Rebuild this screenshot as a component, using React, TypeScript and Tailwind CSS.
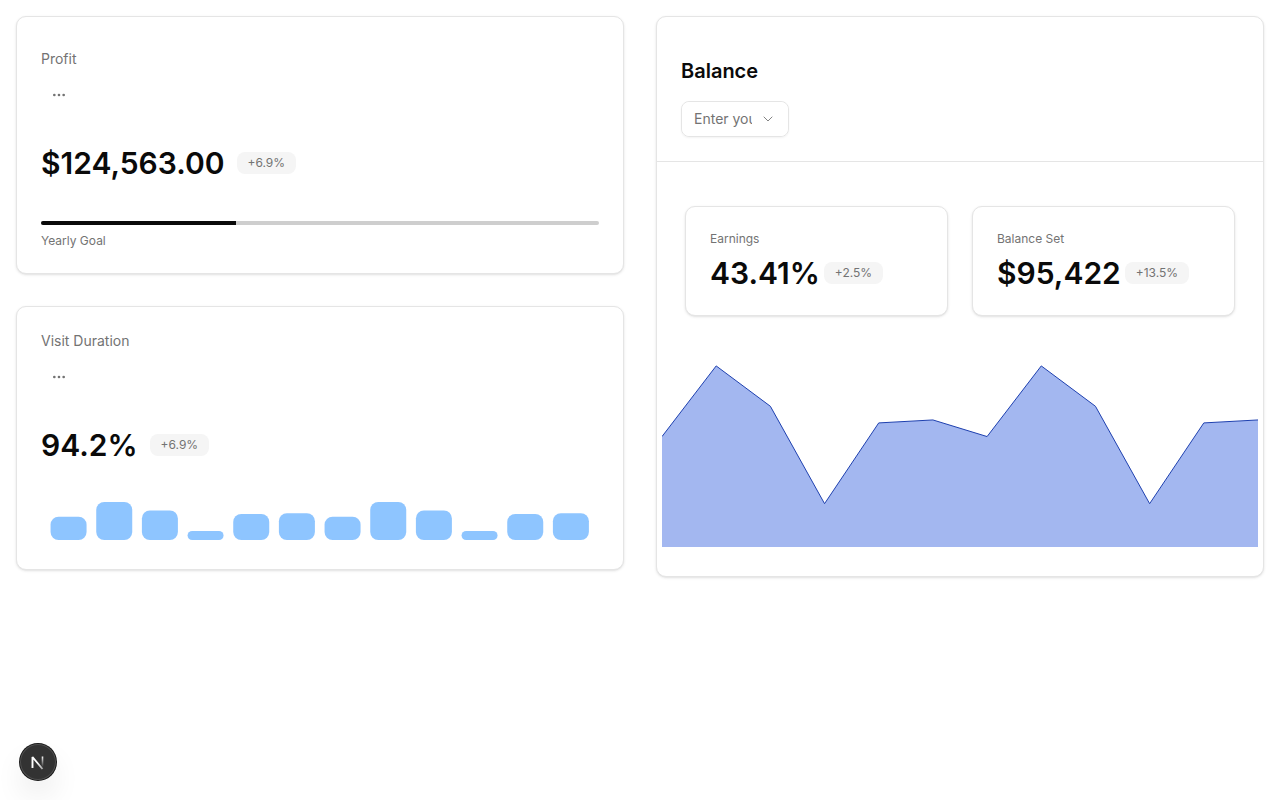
import type { ReactNode } from "react";
import { ChevronDown, Ellipsis } from "lucide-react";
import clsx from "clsx";

const visitors = [186, 305, 237, 73, 209, 214, 186, 305, 237, 73, 209, 214];
const DOMAIN_MAX = 320;

function Card({
  className,
  children,
}: {
  className?: string;
  children: ReactNode;
}) {
  return (
    <div
      className={clsx(
        "rounded-[10px] border border-neutral-200 bg-white shadow-sm",
        className
      )}
    >
      {children}
    </div>
  );
}

function Badge({ children }: { children: ReactNode }) {
  return (
    <span className="inline-flex items-center rounded-lg border border-transparent bg-neutral-100 px-2.5 py-0.5 text-xs text-neutral-500">
      {children}
    </span>
  );
}

function MoreButton({ label }: { label: string }) {
  return (
    <button
      type="button"
      aria-label={label}
      className="flex size-9 items-center justify-center rounded-md text-neutral-500 hover:bg-neutral-100"
    >
      <Ellipsis className="size-4" />
    </button>
  );
}

function VisitBars() {
  const slot = 548 / visitors.length;

  return (
    <svg viewBox="0 0 558 50" className="block w-full" aria-hidden="true">
      {visitors.map((value, i) => {
        const height = (value / DOMAIN_MAX) * 40;
        return (
          <rect
            key={i}
            x={5 + i * slot + slot * 0.1}
            y={45 - height}
            width={36}
            height={height}
            rx={Math.min(8, height / 2)}
            className="fill-blue-300"
          />
        );
      })}
    </svg>
  );
}

function BalanceArea() {
  const points = visitors
    .map((value, i) => {
      const x = (i * 596) / (visitors.length - 1);
      const y = 190 - (value / DOMAIN_MAX) * 190;
      return `${x.toFixed(2)},${y.toFixed(2)}`;
    })
    .join(" L");

  return (
    <svg
      viewBox="0 0 596 190"
      preserveAspectRatio="none"
      className="block h-[190px] w-full"
      aria-hidden="true"
    >
      <path d={`M${points} L596,190 L0,190 Z`} className="fill-[#a3b7f0]" />
      <path
        d={`M${points}`}
        fill="none"
        vectorEffect="non-scaling-stroke"
        className="stroke-[#1e40af]"
      />
    </svg>
  );
}

function StatCard({
  label,
  value,
  change,
}: {
  label: string;
  value: string;
  change: string;
}) {
  return (
    <Card className="p-6">
      <p className="text-xs text-neutral-500">{label}</p>
      <div className="mt-2 flex items-center gap-1">
        <span className="text-3xl font-semibold">{value}</span>
        <Badge>{change}</Badge>
      </div>
    </Card>
  );
}

export default function App() {
  return (
    <main className="min-h-screen bg-white p-4 font-['Inter',sans-serif] text-neutral-950 antialiased">
      <div className="grid grid-cols-2 items-start gap-8">
        <div className="flex flex-col gap-8">
          {/* Profit */}
          <Card className="px-6 pt-8 pb-6">
            <h2 className="text-sm text-neutral-500">Profit</h2>
            <div className="mt-2">
              <MoreButton label="Profit options" />
            </div>
            <div className="mt-8 flex items-center gap-3">
              <span className="text-3xl font-semibold">$124,563.00</span>
              <Badge>+6.9%</Badge>
            </div>
            <div
              role="progressbar"
              aria-label="Yearly Goal"
              aria-valuenow={35}
              className="mt-10 h-1 overflow-hidden rounded-full bg-neutral-950/20"
            >
              <div className="h-full w-[35%] bg-neutral-950" />
            </div>
            <p className="mt-2 text-xs text-neutral-500">Yearly Goal</p>
          </Card>

          {/* Visit duration */}
          <Card className="p-6">
            <h2 className="text-sm text-neutral-500">Visit Duration</h2>
            <div className="mt-2">
              <MoreButton label="Visit duration options" />
            </div>
            <div className="mt-8 mb-8 flex items-center gap-3">
              <span className="text-3xl font-semibold">94.2%</span>
              <Badge>+6.9%</Badge>
            </div>
            <VisitBars />
          </Card>
        </div>

        {/* Balance */}
        <Card>
          <div className="border-b border-neutral-200 px-6 pt-10 pb-6">
            <h2 className="text-xl font-semibold">Balance</h2>
            <div className="relative mt-4 w-[108px] rounded-lg border border-neutral-200 shadow-xs">
              <select
                aria-label="Balance range"
                className="block h-[34px] w-full appearance-none rounded-lg bg-white pr-9 pl-3 text-sm text-neutral-500"
              >
                <option>Enter your</option>
              </select>
              <ChevronDown
                className="pointer-events-none absolute inset-y-0 right-3 my-auto size-4 opacity-50"
                strokeWidth={1.5}
              />
            </div>
          </div>
          <div className="grid grid-cols-2 gap-6 px-7 pt-11 pb-[41px]">
            <StatCard label="Earnings" value="43.41%" change="+2.5%" />
            <StatCard label="Balance Set" value="$95,422" change="+13.5%" />
          </div>
          <div className="px-[5px] pb-[29px]">
            <BalanceArea />
          </div>
        </Card>
      </div>

      <button
        type="button"
        aria-label="Open dev tools"
        className="fixed bottom-5 left-5 flex size-9 items-center justify-center rounded-full bg-[#333] shadow-[0_0_0_1px_#171717,inset_0_0_0_1px_rgba(255,255,255,0.14),0_16px_32px_-8px_rgba(0,0,0,0.24)]"
      >
        <svg
          width="40"
          height="40"
          viewBox="0 0 40 40"
          fill="none"
          className="shrink-0"
        >
          <defs>
            <linearGradient
              id="n-diagonal"
              x1="20"
              y1="20"
              x2="26"
              y2="27"
              gradientUnits="userSpaceOnUse"
            >
              <stop stopColor="#fff" />
              <stop offset="1" stopColor="#fff" stopOpacity="0.5" />
            </linearGradient>
            <linearGradient
              id="n-stem"
              x1="25"
              y1="14"
              x2="25"
              y2="25"
              gradientUnits="userSpaceOnUse"
            >
              <stop stopColor="#fff" />
              <stop offset="1" stopColor="#fff" stopOpacity="0" />
            </linearGradient>
          </defs>
          <path
            d="M14.5 26V15L24.5 27"
            stroke="url(#n-diagonal)"
            strokeWidth="1.9"
            strokeLinejoin="bevel"
          />
          <path d="M24.5 14.5V25" stroke="url(#n-stem)" strokeWidth="1.6" />
        </svg>
      </button>
    </main>
  );
}
